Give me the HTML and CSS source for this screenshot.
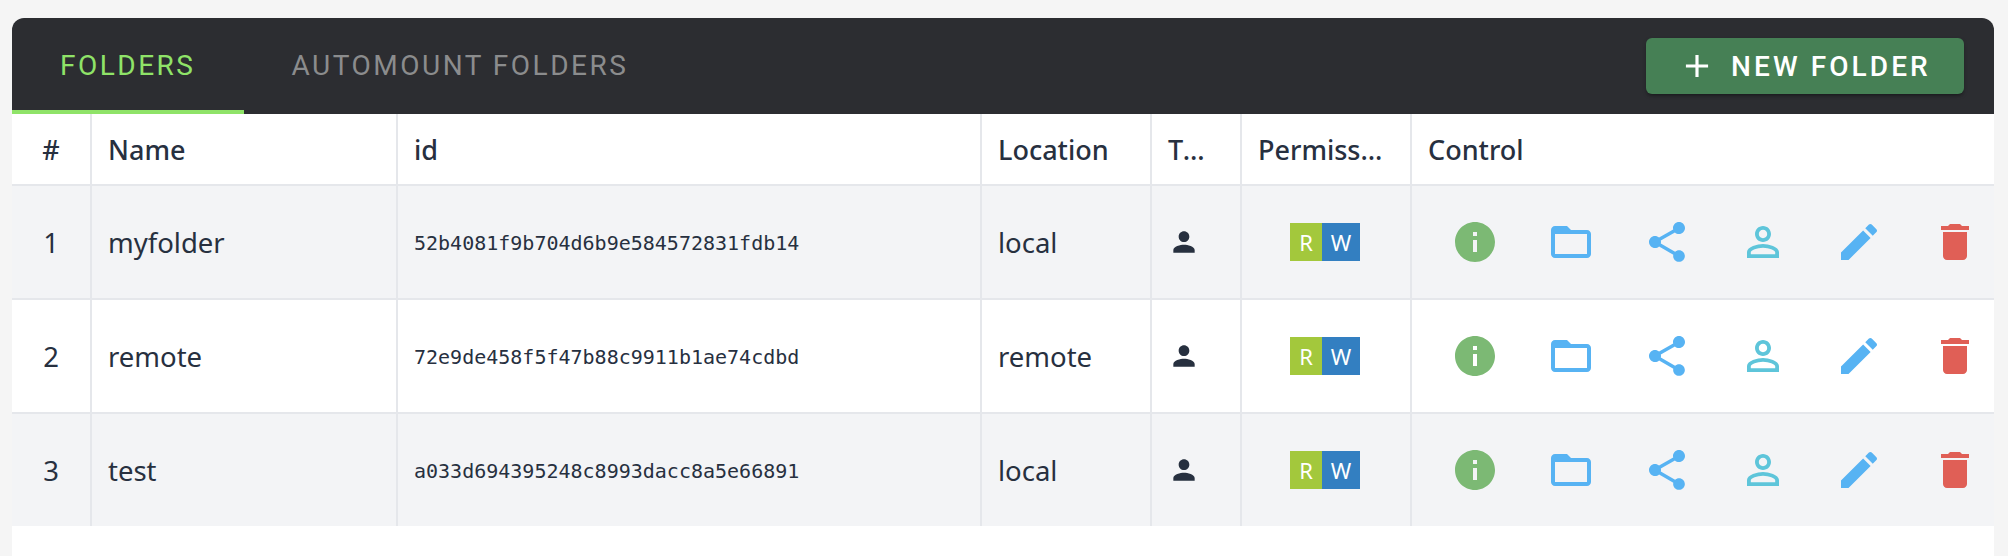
FILE: index.html
```html
<!DOCTYPE html>
<html lang="en">
<head>
  <meta charset="UTF-8" />
  <meta name="viewport" content="width=device-width, initial-scale=1.0"/>
  <title>Folders</title>
  <link rel="stylesheet" href="styles.css">
</head>
<body>

  <!-- Icon set -->
  <svg class="icon-defs" aria-hidden="true">
    <symbol id="i-info" viewBox="0 0 24 24"><path d="M12 2C6.48 2 2 6.48 2 12s4.48 10 10 10 10-4.48 10-10S17.52 2 12 2zm1 15h-2v-6h2v6zm0-8h-2V7h2v2z"/></symbol>
    <symbol id="i-folder" viewBox="0 0 24 24"><path d="M20 6h-8l-2-2H4c-1.1 0-2 .9-2 2v12c0 1.1.9 2 2 2h16c1.1 0 2-.9 2-2V8c0-1.1-.9-2-2-2zm0 12H4V8h16v10z"/></symbol>
    <symbol id="i-share" viewBox="0 0 24 24"><path d="M18 16.08c-.76 0-1.44.3-1.96.77L8.91 12.7c.05-.23.09-.46.09-.7s-.04-.47-.09-.7l7.05-4.11c.54.5 1.25.81 2.04.81 1.66 0 3-1.34 3-3s-1.34-3-3-3-3 1.34-3 3c0 .24.04.47.09.7L8.04 9.81C7.5 9.31 6.79 9 6 9c-1.66 0-3 1.34-3 3s1.34 3 3 3c.79 0 1.5-.31 2.04-.81l7.12 4.16c-.05.21-.08.43-.08.65 0 1.61 1.31 2.92 2.92 2.92 1.61 0 2.92-1.31 2.92-2.92s-1.31-2.92-2.92-2.92z"/></symbol>
    <symbol id="i-user" viewBox="0 0 24 24"><path d="M12 5.9c1.16 0 2.1.94 2.1 2.1s-.94 2.1-2.1 2.1S9.9 9.16 9.9 8s.94-2.1 2.1-2.1m0 9c2.97 0 6.1 1.46 6.1 2.1v1.1H5.9V17c0-.64 3.13-2.1 6.1-2.1M12 4C9.79 4 8 5.79 8 8s1.79 4 4 4 4-1.79 4-4-1.79-4-4-4zm0 9c-2.67 0-8 1.34-8 4v3h16v-3c0-2.66-5.33-4-8-4z"/></symbol>
    <symbol id="i-edit" viewBox="0 0 24 24"><path d="M3 17.25V21h3.75L17.81 9.94l-3.75-3.75L3 17.25zM20.71 7.04c.39-.39.39-1.02 0-1.41l-2.34-2.34c-.39-.39-1.02-.39-1.41 0l-1.83 1.83 3.75 3.75 1.83-1.83z"/></symbol>
    <symbol id="i-trash" viewBox="0 0 24 24"><path d="M6 19c0 1.1.9 2 2 2h8c1.1 0 2-.9 2-2V7H6v12zM19 4h-3.5l-1-1h-5l-1 1H5v2h14V4z"/></symbol>
    <symbol id="i-person" viewBox="0 0 24 24"><path d="M12 12c2.21 0 4-1.79 4-4s-1.79-4-4-4-4 1.79-4 4 1.79 4 4 4zm0 2c-2.67 0-8 1.34-8 4v2h16v-2c0-2.66-5.33-4-8-4z"/></symbol>
    <symbol id="i-plus" viewBox="0 0 24 24"><path d="M19 13h-6v6h-2v-6H5v-2h6V5h2v6h6v2z"/></symbol>
  </svg>

  <main class="card">

    <!-- Tabs -->
    <header class="toolbar">
      <nav class="tabs">
        <a class="tab tab-active" href="#folders">Folders</a>
        <a class="tab" href="#automount">Automount Folders</a>
      </nav>
      <button class="new-btn" type="button"><svg class="new-plus"><use href="#i-plus"/></svg>New Folder</button>
    </header>

    <!-- Folder table -->
    <table class="folders">
      <colgroup>
        <col class="col-num"><col class="col-name"><col class="col-id"><col class="col-loc"><col class="col-type"><col class="col-perm"><col>
      </colgroup>
      <thead>
        <tr>
          <th class="center">#</th>
          <th>Name</th>
          <th>id</th>
          <th>Location</th>
          <th class="th-type">Type</th>
          <th class="th-perm">Permissions</th>
          <th>Control</th>
        </tr>
      </thead>
      <tbody>
        <tr>
          <td class="center">1</td>
          <td>myfolder</td>
          <td class="mono">52b4081f9b704d6b9e584572831fdb14</td>
          <td>local</td>
          <td><svg class="type-icon"><use href="#i-person"/></svg></td>
          <td><div class="perm"><span class="perm-r">R</span><span class="perm-w">W</span></div></td>
          <td>
            <div class="controls">
              <svg class="ctl c-green"><use href="#i-info"/></svg>
              <svg class="ctl c-blue"><use href="#i-folder"/></svg>
              <svg class="ctl c-blue"><use href="#i-share"/></svg>
              <svg class="ctl c-cyan"><use href="#i-user"/></svg>
              <svg class="ctl c-blue"><use href="#i-edit"/></svg>
              <svg class="ctl c-red"><use href="#i-trash"/></svg>
            </div>
          </td>
        </tr>
        <tr>
          <td class="center">2</td>
          <td>remote</td>
          <td class="mono">72e9de458f5f47b88c9911b1ae74cdbd</td>
          <td>remote</td>
          <td><svg class="type-icon"><use href="#i-person"/></svg></td>
          <td><div class="perm"><span class="perm-r">R</span><span class="perm-w">W</span></div></td>
          <td>
            <div class="controls">
              <svg class="ctl c-green"><use href="#i-info"/></svg>
              <svg class="ctl c-blue"><use href="#i-folder"/></svg>
              <svg class="ctl c-blue"><use href="#i-share"/></svg>
              <svg class="ctl c-cyan"><use href="#i-user"/></svg>
              <svg class="ctl c-blue"><use href="#i-edit"/></svg>
              <svg class="ctl c-red"><use href="#i-trash"/></svg>
            </div>
          </td>
        </tr>
        <tr>
          <td class="center">3</td>
          <td>test</td>
          <td class="mono">a033d694395248c8993dacc8a5e66891</td>
          <td>local</td>
          <td><svg class="type-icon"><use href="#i-person"/></svg></td>
          <td><div class="perm"><span class="perm-r">R</span><span class="perm-w">W</span></div></td>
          <td>
            <div class="controls">
              <svg class="ctl c-green"><use href="#i-info"/></svg>
              <svg class="ctl c-blue"><use href="#i-folder"/></svg>
              <svg class="ctl c-blue"><use href="#i-share"/></svg>
              <svg class="ctl c-cyan"><use href="#i-user"/></svg>
              <svg class="ctl c-blue"><use href="#i-edit"/></svg>
              <svg class="ctl c-red"><use href="#i-trash"/></svg>
            </div>
          </td>
        </tr>
      </tbody>
    </table>
  </main>

</body>
</html>
```

FILE: styles.css
```css
* {
  box-sizing: border-box;
}
body, html {
  margin: 0;
  padding: 0;
  height: 100%;
  overflow: hidden;
  background-color: #f5f5f5;
  font-family: "Noto Sans", sans-serif;
  color: #27303f;
}
body {
  padding: 18px 14px 0 12px;
}

.icon-defs {
  display: none;
}

.card {
  height: 100%;
  background-color: #ffffff;
  border-radius: 12px 12px 0 0;
  overflow: hidden;
}

/* Tabs */
.toolbar {
  height: 96px;
  background-color: #2c2d31;
  display: flex;
  justify-content: space-between;
  padding-right: 30px;
}
.tabs {
  display: flex;
}
.tab {
  height: 96px;
  padding: 2px 48px 0;
  display: flex;
  align-items: center;
  font-family: Roboto, sans-serif;
  font-size: 28px;
  letter-spacing: 2.5px;
  text-transform: uppercase;
  text-decoration: none;
  color: #8b8c8d;
  border-bottom: 4px solid transparent;
}
.tab-active {
  color: #8fe368;
  border-bottom-color: #8fe368;
}
.new-btn {
  width: 318px;
  height: 56px;
  margin-top: 20px;
  padding: 0 0 0 32px;
  display: flex;
  align-items: center;
  gap: 15px;
  background-color: #468055;
  color: #ffffff;
  border: none;
  border-radius: 6px;
  box-shadow: 0 3px 3px -2px rgba(0,0,0,0.3), 0 2px 4px rgba(0,0,0,0.2);
  font-family: Roboto, sans-serif;
  font-size: 28px;
  font-weight: 500;
  letter-spacing: 3.1px;
  text-transform: uppercase;
}
.new-plus {
  width: 38px;
  height: 38px;
  fill: #ffffff;
}

/* Table */
.folders {
  width: 100%;
  table-layout: fixed;
  border-collapse: separate;
  border-spacing: 0;
}
.col-num { width: 80px; }
.col-name { width: 306px; }
.col-id { width: 584px; }
.col-loc { width: 170px; }
.col-type { width: 90px; }
.col-perm { width: 170px; }

th, td {
  padding: 0 16px;
  text-align: left;
  border-right: 2px solid #e5e7eb;
  border-bottom: 2px solid #e5e7eb;
  white-space: nowrap;
  overflow: hidden;
  text-overflow: ellipsis;
}
th:last-child, td:last-child {
  border-right: none;
}
th {
  height: 72px;
  font-size: 27px;
  font-weight: 500;
}
td {
  height: 114px;
  font-size: 27.5px;
}
tbody tr:nth-child(odd) td {
  background-color: #f3f4f6;
}
tbody tr:last-child td {
  height: 112px;
  border-bottom: none;
}
.center {
  text-align: center;
}
.th-type {
  padding-right: 24px;
}
.th-perm {
  padding-right: 26px;
}
.mono {
  font-family: "DejaVu Sans Mono", monospace;
  font-size: 20px;
  padding-top: 1px;
}

.type-icon {
  display: block;
  width: 32px;
  height: 32px;
  fill: #27303f;
}

.perm {
  display: flex;
  justify-content: center;
  margin-left: -2px;
  color: #ffffff;
  font-size: 22px;
  line-height: 38px;
}
.perm span {
  height: 38px;
  text-align: center;
}
.perm-r {
  width: 32px;
  background-color: #a3c83c;
}
.perm-w {
  width: 38px;
  background-color: #337fc1;
}

.controls {
  display: flex;
  gap: 48px;
  padding-left: 23px;
}
.ctl {
  width: 48px;
  height: 48px;
  flex-shrink: 0;
}
.c-green { fill: #7cb974; }
.c-blue { fill: #57b3f3; }
.c-cyan { fill: #5ec5da; }
.c-red { fill: #e05f56; }
```
